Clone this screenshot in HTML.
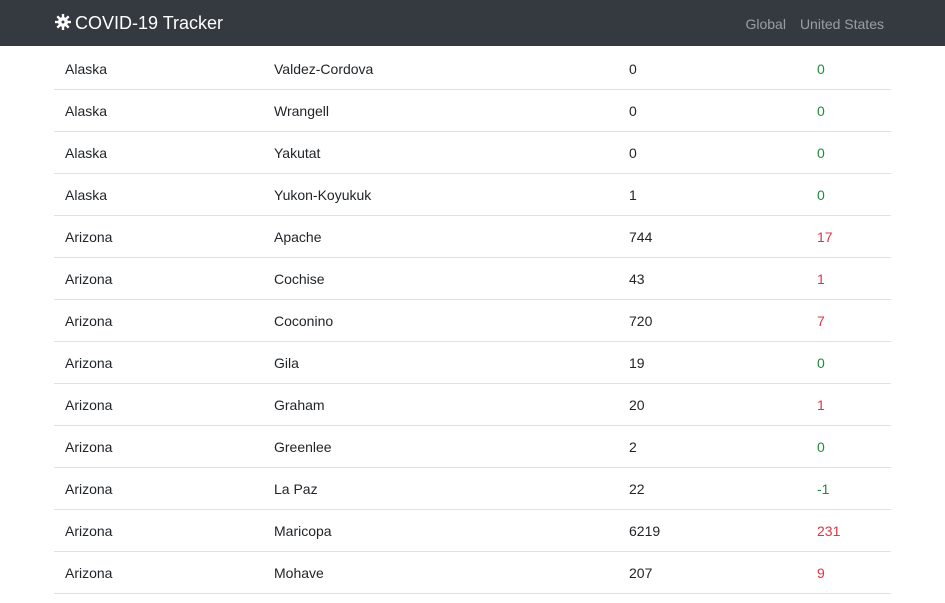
<!DOCTYPE html>
<html><head><style>
body{margin:0;background:#fff;font-family:"Liberation Sans",sans-serif;width:945px;height:603px;overflow:hidden;position:relative}
.nav{position:absolute;left:0;top:0;width:945px;height:46px;background:#343a40;}
.brand{position:absolute;left:54px;top:13px;color:#fff;font-size:18px;}
.links{position:absolute;right:61px;top:16px;color:rgba(255,255,255,.5);font-size:14px;}
.links span{margin-left:14px}
.row{position:absolute;left:54px;width:837px;height:41px;border-bottom:1px solid #dee2e6;font-size:14px;color:#212529}
.row div{position:absolute;top:13px}
.g{color:#208a3c}.r{color:#dc3545}
</style></head><body>
<div class="nav"><div class="brand"><svg width="18" height="18" viewBox="0 0 18 18" style="vertical-align:-2px;margin-right:3px"><g fill="#fff"><circle cx="9" cy="9" r="5"/><g stroke="#fff" stroke-width="2.4"><line x1="9" y1="1" x2="9" y2="17"/><line x1="1" y1="9" x2="17" y2="9"/><line x1="3.3" y1="3.3" x2="14.7" y2="14.7"/><line x1="14.7" y1="3.3" x2="3.3" y2="14.7"/></g></g><circle cx="9" cy="9" r="1.5" fill="#343a40"/></svg>COVID-19 Tracker</div>
<div class="links"><span>Global</span><span>United States</span></div></div>
<div id="t"></div>
<script>
var d=[["Alaska","Valdez-Cordova","0","0"],["Alaska","Wrangell","0","0"],["Alaska","Yakutat","0","0"],["Alaska","Yukon-Koyukuk","1","0"],["Arizona","Apache","744","17"],["Arizona","Cochise","43","1"],["Arizona","Coconino","720","7"],["Arizona","Gila","19","0"],["Arizona","Graham","20","1"],["Arizona","Greenlee","2","0"],["Arizona","La Paz","22","-1"],["Arizona","Maricopa","6219","231"],["Arizona","Mohave","207","9"]];
var h="";d.forEach(function(r,i){var c=(+r[3]>0)?"r":"g";h+='<div class="row" style="top:'+(48+i*42)+'px"><div style="left:11px">'+r[0]+'</div><div style="left:220px">'+r[1]+'</div><div style="left:575px">'+r[2]+'</div><div class="'+c+'" style="left:763px">'+r[3]+'</div></div>';});
document.getElementById("t").innerHTML=h;
</script>
</body></html>
